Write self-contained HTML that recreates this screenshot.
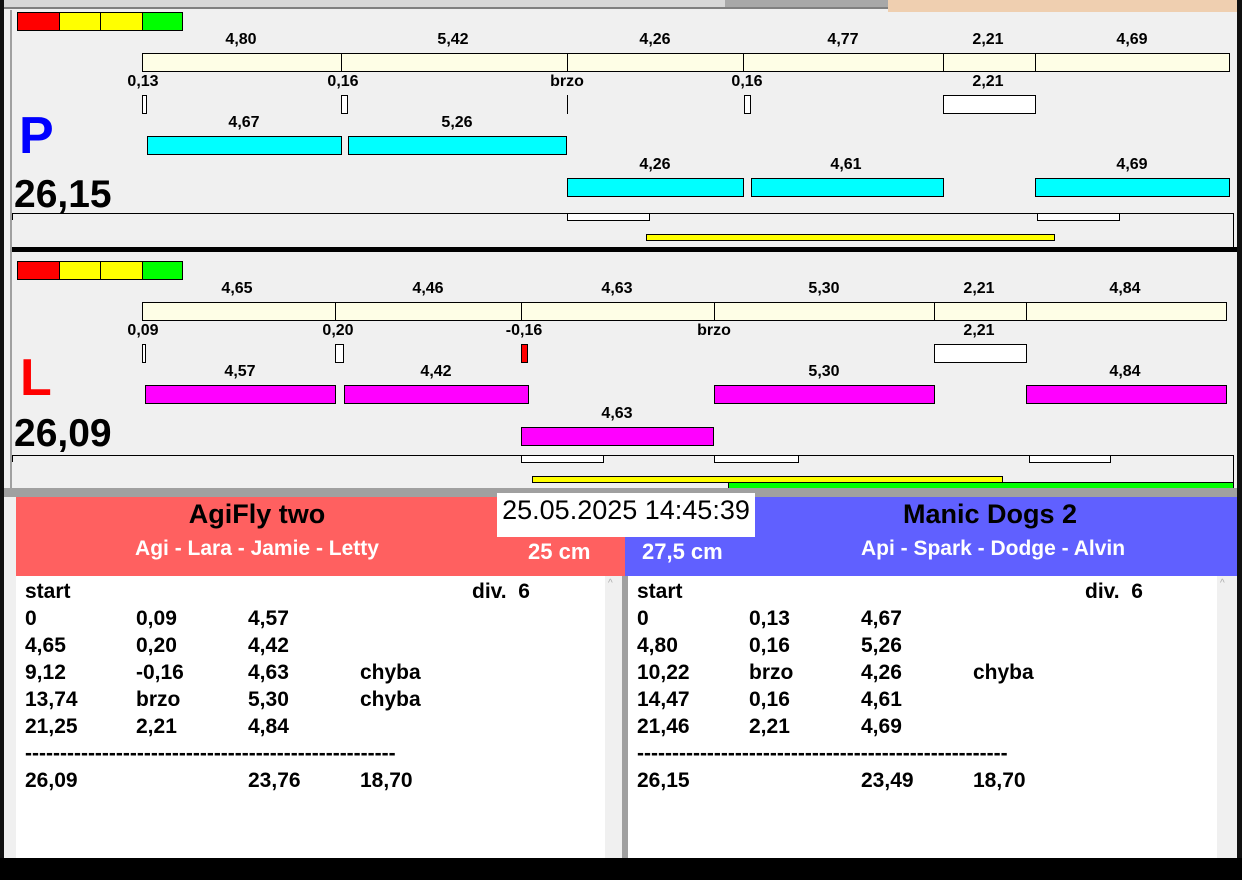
<!DOCTYPE html><html><head><meta charset="utf-8"><style>
*{margin:0;padding:0;box-sizing:border-box}
body{width:1242px;height:880px;position:relative;overflow:hidden;background:#f0f0f0;font-family:"Liberation Sans",sans-serif}
div{position:absolute}
.b{border:1px solid #000}
.cr{background:#fefee6}
.cy{background:#00ffff}
.mg{background:#ff00ff}
.w{background:#fff}
.l{font-weight:bold;font-size:16px;transform:translateX(-50%);line-height:16px;white-space:nowrap}
.t{font-weight:bold;font-size:21px;line-height:27px;white-space:nowrap}
</style></head><body>
<div style="left:0;top:0;width:4px;height:880px;background:#101010"></div>
<div style="left:1237px;top:0;width:5px;height:880px;background:#101010"></div>
<div style="left:4px;top:0;width:884px;height:9px;background:#d8d8d8;border-bottom:2px solid #808080"></div>
<div style="left:725px;top:0;width:163px;height:7px;background:#a8a8a8"></div>
<div style="left:888px;top:0;width:349px;height:12px;background:#efcfb0"></div>
<div style="left:10px;top:10px;width:2px;height:480px;background:#a0a0a0"></div>

<!-- panel 1 -->
<div class="b" style="left:17px;top:12px;width:43px;height:19px;background:#f00"></div>
<div class="b" style="left:59px;top:12px;width:42px;height:19px;background:#ff0"></div>
<div class="b" style="left:100px;top:12px;width:43px;height:19px;background:#ff0"></div>
<div class="b" style="left:142px;top:12px;width:41px;height:19px;background:#0f0"></div>
<div class="l" style="left:241px;top:32px">4,80</div><div class="l" style="left:453px;top:32px">5,42</div><div class="l" style="left:655px;top:32px">4,26</div><div class="l" style="left:843px;top:32px">4,77</div><div class="l" style="left:988px;top:32px">2,21</div><div class="l" style="left:1132px;top:32px">4,69</div>
<div class="b cr" style="left:142px;top:53px;width:200px;height:19px"></div><div class="b cr" style="left:341px;top:53px;width:227px;height:19px"></div><div class="b cr" style="left:567px;top:53px;width:177px;height:19px"></div><div class="b cr" style="left:743px;top:53px;width:201px;height:19px"></div><div class="b cr" style="left:943px;top:53px;width:93px;height:19px"></div><div class="b cr" style="left:1035px;top:53px;width:195px;height:19px"></div>
<div class="l" style="left:143px;top:74px">0,13</div><div class="l" style="left:343px;top:74px">0,16</div><div class="l" style="left:567px;top:74px">brzo</div><div class="l" style="left:747px;top:74px">0,16</div><div class="l" style="left:988px;top:74px">2,21</div>
<div class="b w" style="left:142px;top:95px;width:5px;height:19px"></div><div class="b w" style="left:341px;top:95px;width:7px;height:19px"></div><div style="left:567px;top:95px;width:1px;height:19px;background:#000"></div><div class="b w" style="left:744px;top:95px;width:7px;height:19px"></div><div class="b w" style="left:943px;top:95px;width:93px;height:19px"></div>
<div style="left:19px;top:106px;font-weight:bold;font-size:52px;color:#0000ff;line-height:60px">P</div>
<div class="l" style="left:244px;top:115px">4,67</div><div class="l" style="left:457px;top:115px">5,26</div>
<div class="b cy" style="left:147px;top:136px;width:195px;height:19px"></div><div class="b cy" style="left:348px;top:136px;width:219px;height:19px"></div>
<div class="l" style="left:655px;top:157px">4,26</div><div class="l" style="left:846px;top:157px">4,61</div><div class="l" style="left:1132px;top:157px">4,69</div>
<div class="b cy" style="left:567px;top:178px;width:177px;height:19px"></div><div class="b cy" style="left:751px;top:178px;width:193px;height:19px"></div><div class="b cy" style="left:1035px;top:178px;width:195px;height:19px"></div>
<div style="left:14px;top:172px;font-weight:bold;font-size:39px;line-height:46px">26,15</div>
<div style="left:12px;top:213px;width:1222px;height:35px;border-top:1px solid #000;border-right:1px solid #000"></div>
<div style="left:12px;top:213px;width:1px;height:7px;background:#000"></div>
<div class="b w" style="left:567px;top:213px;width:83px;height:8px"></div><div class="b w" style="left:1037px;top:213px;width:83px;height:8px"></div>
<div class="b" style="left:646px;top:234px;width:409px;height:7px;background:#ff0"></div>
<div style="left:12px;top:247px;width:1225px;height:5px;background:#000"></div>

<!-- panel 2 -->
<div class="b" style="left:17px;top:261px;width:43px;height:19px;background:#f00"></div>
<div class="b" style="left:59px;top:261px;width:42px;height:19px;background:#ff0"></div>
<div class="b" style="left:100px;top:261px;width:43px;height:19px;background:#ff0"></div>
<div class="b" style="left:142px;top:261px;width:41px;height:19px;background:#0f0"></div>
<div class="l" style="left:237px;top:281px">4,65</div><div class="l" style="left:428px;top:281px">4,46</div><div class="l" style="left:617px;top:281px">4,63</div><div class="l" style="left:824px;top:281px">5,30</div><div class="l" style="left:979px;top:281px">2,21</div><div class="l" style="left:1125px;top:281px">4,84</div>
<div class="b cr" style="left:142px;top:302px;width:194px;height:19px"></div><div class="b cr" style="left:335px;top:302px;width:187px;height:19px"></div><div class="b cr" style="left:521px;top:302px;width:194px;height:19px"></div><div class="b cr" style="left:714px;top:302px;width:221px;height:19px"></div><div class="b cr" style="left:934px;top:302px;width:93px;height:19px"></div><div class="b cr" style="left:1026px;top:302px;width:201px;height:19px"></div>
<div class="l" style="left:143px;top:323px">0,09</div><div class="l" style="left:338px;top:323px">0,20</div><div class="l" style="left:524px;top:323px">-0,16</div><div class="l" style="left:714px;top:323px">brzo</div><div class="l" style="left:979px;top:323px">2,21</div>
<div class="b w" style="left:142px;top:344px;width:4px;height:19px"></div><div class="b w" style="left:335px;top:344px;width:9px;height:19px"></div><div class="b" style="left:521px;top:344px;width:7px;height:19px;background:#f00"></div><div class="b w" style="left:934px;top:344px;width:93px;height:19px"></div>
<div style="left:20px;top:348px;font-weight:bold;font-size:52px;color:#f00;line-height:60px">L</div>
<div class="l" style="left:240px;top:364px">4,57</div><div class="l" style="left:436px;top:364px">4,42</div><div class="l" style="left:824px;top:364px">5,30</div><div class="l" style="left:1125px;top:364px">4,84</div>
<div class="b mg" style="left:145px;top:385px;width:191px;height:19px"></div><div class="b mg" style="left:344px;top:385px;width:185px;height:19px"></div><div class="b mg" style="left:714px;top:385px;width:221px;height:19px"></div><div class="b mg" style="left:1026px;top:385px;width:201px;height:19px"></div>
<div class="l" style="left:617px;top:406px">4,63</div>
<div class="b mg" style="left:521px;top:427px;width:193px;height:19px"></div>
<div style="left:14px;top:411px;font-weight:bold;font-size:39px;line-height:46px">26,09</div>
<div style="left:12px;top:455px;width:1222px;height:34px;border-top:1px solid #000;border-right:1px solid #000"></div>
<div style="left:12px;top:455px;width:1px;height:7px;background:#000"></div>
<div class="b w" style="left:521px;top:455px;width:83px;height:8px"></div><div class="b w" style="left:714px;top:455px;width:85px;height:8px"></div><div class="b w" style="left:1029px;top:455px;width:82px;height:8px"></div>
<div class="b" style="left:532px;top:476px;width:471px;height:7px;background:#ff0"></div>
<div class="b" style="left:728px;top:482px;width:506px;height:7px;background:#0f0"></div>
<div style="left:4px;top:488px;width:1233px;height:9px;background:#a0a0a0"></div>

<!-- bottom -->
<div style="left:16px;top:497px;width:609px;height:79px;background:#ff6060"></div>
<div style="left:625px;top:497px;width:612px;height:79px;background:#6060ff"></div>
<div style="left:497px;top:493px;width:258px;height:44px;background:#fff;font-size:27px;line-height:34px;text-align:center;white-space:nowrap">25.05.2025 14:45:39</div>
<div style="left:257px;top:498px;transform:translateX(-50%);font-weight:bold;font-size:27px;line-height:32px;white-space:nowrap">AgiFly two</div>
<div style="left:990px;top:498px;transform:translateX(-50%);font-weight:bold;font-size:27px;line-height:32px;white-space:nowrap">Manic Dogs 2</div>
<div style="left:257px;top:537px;transform:translateX(-50%);font-weight:bold;font-size:21px;color:#fff;line-height:24px;white-space:nowrap">Agi - Lara - Jamie - Letty</div>
<div style="left:993px;top:537px;transform:translateX(-50%);font-weight:bold;font-size:21px;color:#fff;line-height:24px;white-space:nowrap">Api - Spark - Dodge - Alvin</div>
<div style="left:528px;top:539px;font-weight:bold;font-size:22px;color:#fff;line-height:26px">25 cm</div>
<div style="left:642px;top:539px;font-weight:bold;font-size:22px;color:#fff;line-height:26px">27,5 cm</div>
<div style="left:16px;top:576px;width:589px;height:282px;background:#fff"></div>
<div style="left:605px;top:576px;width:17px;height:282px;background:#f0f0f0"></div>
<div style="left:622px;top:576px;width:6px;height:282px;background:#a0a0a0"></div>
<div style="left:628px;top:576px;width:589px;height:282px;background:#fff"></div>
<div style="left:1217px;top:576px;width:20px;height:282px;background:#f0f0f0"></div>
<div style="left:608px;top:578px;font-size:10px;color:#aaa">^</div><div style="left:1220px;top:578px;font-size:10px;color:#aaa">^</div>
<div style="left:0;top:858px;width:1242px;height:22px;background:#000"></div>

<div class="t" style="left:25px;top:578px">start<br>0<br>4,65<br>9,12<br>13,74<br>21,25<br>-----------------------------------------------------<br>26,09</div>
<div class="t" style="left:136px;top:605px">0,09<br>0,20<br>-0,16<br>brzo<br>2,21</div>
<div class="t" style="left:248px;top:605px">4,57<br>4,42<br>4,63<br>5,30<br>4,84<br><br>23,76</div>
<div class="t" style="left:360px;top:659px">chyba<br>chyba<br><br><br>18,70</div>
<div class="t" style="left:472px;top:578px">div.&nbsp; 6</div>

<div class="t" style="left:637px;top:578px">start<br>0<br>4,80<br>10,22<br>14,47<br>21,46<br>-----------------------------------------------------<br>26,15</div>
<div class="t" style="left:749px;top:605px">0,13<br>0,16<br>brzo<br>0,16<br>2,21</div>
<div class="t" style="left:861px;top:605px">4,67<br>5,26<br>4,26<br>4,61<br>4,69<br><br>23,49</div>
<div class="t" style="left:973px;top:659px">chyba<br><br><br><br>18,70</div>
<div class="t" style="left:1085px;top:578px">div.&nbsp; 6</div>
</body></html>
